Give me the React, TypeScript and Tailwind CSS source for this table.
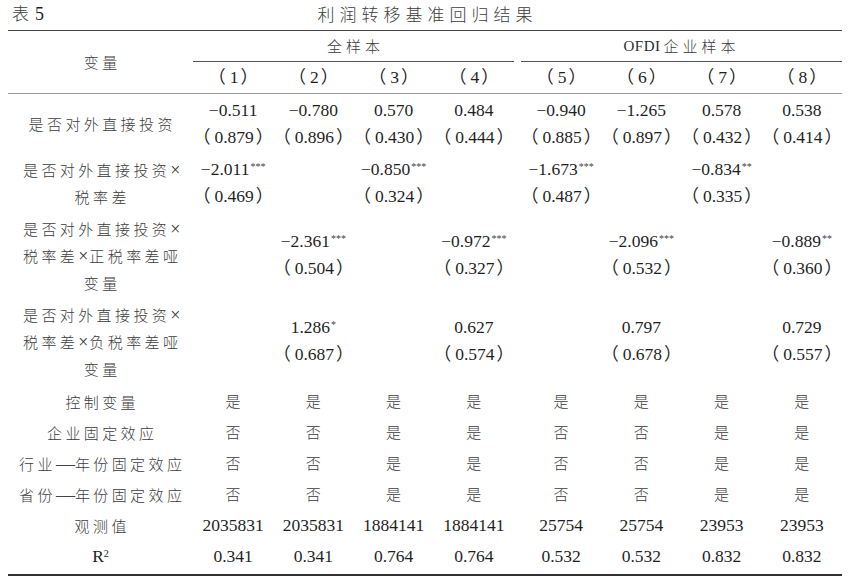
import React from "react";

type Est = { b: string; star?: string; se: string } | null;

const GRID =
  "grid grid-cols-[185px_repeat(4,80.25px)_7px_repeat(4,80.25px)]";

const CJK = "font-['Noto_Sans_CJK_SC',sans-serif] font-light text-[#3c3c3c]";

const MAIN: Est[] = [
  { b: "−0.511", se: "0.879" },
  { b: "−0.780", se: "0.896" },
  { b: "0.570", se: "0.430" },
  { b: "0.484", se: "0.444" },
  { b: "−0.940", se: "0.885" },
  { b: "−1.265", se: "0.897" },
  { b: "0.578", se: "0.432" },
  { b: "0.538", se: "0.414" },
];

const TAX: Est[] = [
  { b: "−2.011", star: "***", se: "0.469" },
  null,
  { b: "−0.850", star: "***", se: "0.324" },
  null,
  { b: "−1.673", star: "***", se: "0.487" },
  null,
  { b: "−0.834", star: "**", se: "0.335" },
  null,
];

const POS: Est[] = [
  null,
  { b: "−2.361", star: "***", se: "0.504" },
  null,
  { b: "−0.972", star: "***", se: "0.327" },
  null,
  { b: "−2.096", star: "***", se: "0.532" },
  null,
  { b: "−0.889", star: "**", se: "0.360" },
];

const NEG: Est[] = [
  null,
  { b: "1.286", star: "*", se: "0.687" },
  null,
  { b: "0.627", se: "0.574" },
  null,
  { b: "0.797", se: "0.678" },
  null,
  { b: "0.729", se: "0.557" },
];

const YES_ALL = ["是", "是", "是", "是", "是", "是", "是", "是"];
const FE = ["否", "否", "是", "是", "否", "否", "是", "是"];

const SIMPLE: { label: string; vals: string[]; cjk?: boolean }[] = [
  { label: "控制变量", vals: YES_ALL, cjk: true },
  { label: "企业固定效应", vals: FE, cjk: true },
  { label: "行业—年份固定效应", vals: FE, cjk: true },
  { label: "省份—年份固定效应", vals: FE, cjk: true },
  {
    label: "观测值",
    vals: ["2035831", "2035831", "1884141", "1884141", "25754", "25754", "23953", "23953"],
  },
  {
    label: "R2",
    vals: ["0.341", "0.341", "0.764", "0.764", "0.532", "0.532", "0.832", "0.832"],
  },
];

// wraps a number in wide parentheses as in the printed table
function Paren({ children }: { children: React.ReactNode }) {
  return (
    <span>
      <span className="pr-[4px]">（</span>
      {children}
      <span className="pl-[2px]">）</span>
    </span>
  );
}

function Split({ cells }: { cells: React.ReactNode[] }) {
  return (
    <>
      {cells.slice(0, 4).map((c, i) => (
        <div key={i} className="flex flex-col items-center justify-center">
          {c}
        </div>
      ))}
      <div />
      {cells.slice(4).map((c, i) => (
        <div key={i + 4} className="flex flex-col items-center justify-center">
          {c}
        </div>
      ))}
    </>
  );
}

function EstCell({ e }: { e: Est }) {
  if (!e) return null;
  return (
    <>
      <span>
        {e.b}
        {e.star && <sup className="text-[10px] text-[#444] ml-[1px]">{e.star}</sup>}
      </span>
      <Paren>{e.se}</Paren>
    </>
  );
}

// × and — are set in the Latin serif, the rest in the CJK face
function Label({ text }: { text: string }) {
  if (text === "R2")
    return (
      <span>
        R<sup className="text-[10px]">2</sup>
      </span>
    );
  const parts = text.split(/([×—])/);
  return (
    <span className={`${CJK} text-[15px] leading-[27px] tracking-[3.4px] pl-[3.4px]`}>
      {parts.map((p, i) =>
        p === "×" ? (
          <span key={i} className="font-['Liberation_Serif'] font-normal text-[18px] leading-[0] text-[#333] tracking-[1px]">
            ×
          </span>
        ) : p === "—" ? (
          <span key={i} className="font-['Liberation_Serif'] font-normal text-[19px] leading-[0] text-[#444] tracking-normal">
            —
          </span>
        ) : (
          <span key={i}>{p}</span>
        )
      )}
    </span>
  );
}

function EstRow({ lines, data }: { lines: string[]; data: Est[] }) {
  return (
    <div className={`${GRID} py-[2.5px] leading-[27px]`}>
      <div className="flex flex-col items-center justify-center">
        {lines.map((l) => (
          <Label key={l} text={l} />
        ))}
      </div>
      <Split cells={data.map((e, i) => <EstCell key={i} e={e} />)} />
    </div>
  );
}

export default function App() {
  return (
    <div className="w-[854px] h-[586px] bg-white text-[#1f1f1f] font-['Liberation_Serif','Noto_Sans_CJK_SC',serif] text-[17.5px]">
      {/* caption */}
      <div className="ml-[8px] w-[834px] h-[30px] grid grid-cols-[1fr_auto_1fr] items-center pb-[3px]">
        <div className="pl-[4px] text-[17px]">
          <span className={CJK}>表</span>
          <span className="text-[18px] ml-[6px]">5</span>
        </div>
        <div className={`${CJK} text-[17px] tracking-[5px] pl-[5px]`}>利润转移基准回归结果</div>
        <div />
      </div>

      <div className="ml-[8px] w-[834px] border-t-[1.5px] border-[#444]">
        {/* header */}
        <div className={`${GRID} grid-rows-[31px_31px] border-b border-[#9a9a9a]`}>
          <div className={`row-span-2 flex items-center justify-center text-[15px] tracking-[3.4px] pl-[3.4px] ${CJK}`}>
            变量
          </div>
          <div className={`col-span-4 flex items-center justify-center border-b border-[#555] text-[15px] tracking-[4px] pl-[4px] ${CJK}`}>
            全样本
          </div>
          <div />
          <div className="col-span-4 flex items-center justify-center border-b border-[#555] text-[15px]">
            <span className="tracking-[0.5px] text-[#2a2a2a]">OFDI</span>
            <span className={`${CJK} tracking-[4px] pl-[3px]`}>企业样本</span>
          </div>
          <Split
            cells={["1", "2", "3", "4", "5", "6", "7", "8"].map((n) => (
              <Paren key={n}>{n}</Paren>
            ))}
          />
        </div>

        {/* estimates */}
        <EstRow lines={["是否对外直接投资"]} data={MAIN} />
        <EstRow lines={["是否对外直接投资×", "税率差"]} data={TAX} />
        <EstRow lines={["是否对外直接投资×", "税率差×正税率差哑", "变量"]} data={POS} />
        <EstRow lines={["是否对外直接投资×", "税率差×负税率差哑", "变量"]} data={NEG} />

        {/* controls and stats */}
        <div className="mt-[1.5px] pb-[2px] border-b-2 border-[#333]">
          {SIMPLE.map((r, k) => (
            <div key={k} className={`${GRID} h-[31px]`}>
              <div className="flex items-center justify-center">
                <Label text={r.label} />
              </div>
              <Split
                cells={r.vals.map((v, i) => (
                  <span key={i} className={r.cjk ? `${CJK} text-[15px]` : ""}>
                    {v}
                  </span>
                ))}
              />
            </div>
          ))}
        </div>
      </div>
    </div>
  );
}
